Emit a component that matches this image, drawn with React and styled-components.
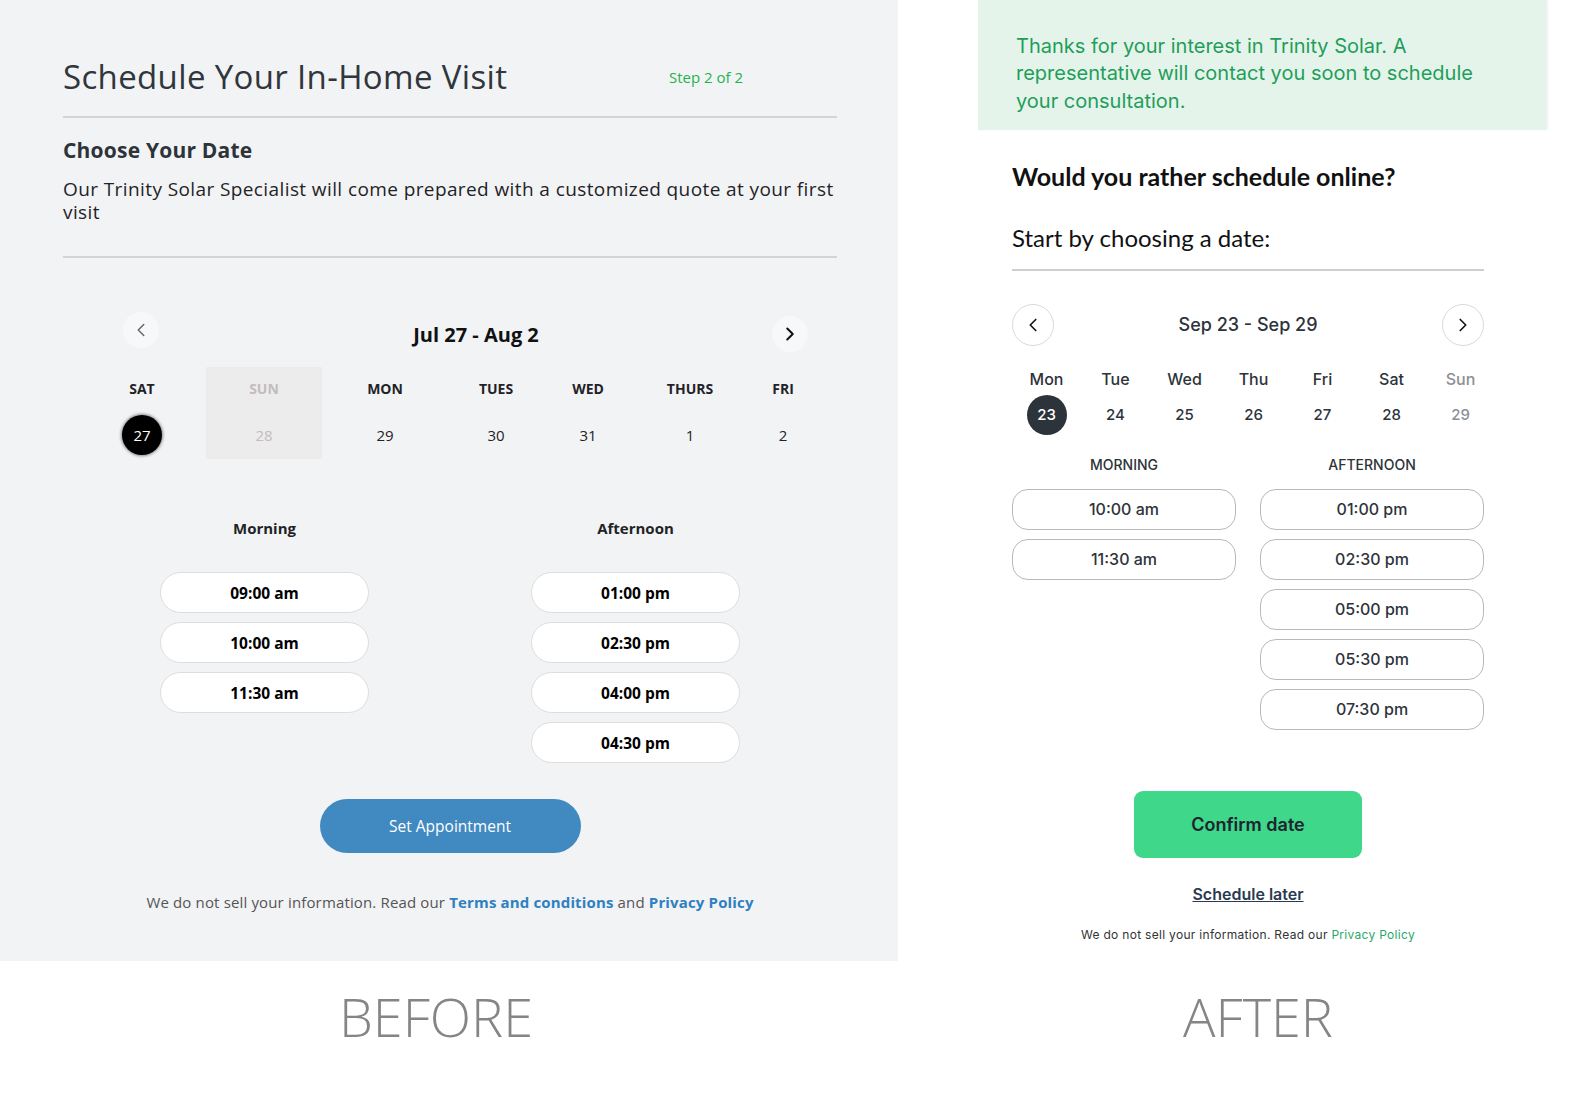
import styled, { createGlobalStyle } from 'styled-components';
import { ChevronLeft, ChevronRight } from 'lucide-react';

const GlobalStyle = createGlobalStyle`
  html, body { margin: 0; padding: 0; background: #fff; }
  body { width: 1588px; height: 1094px; overflow: hidden; }
  * { box-sizing: border-box; }
`;

const POP = `"Open Sans", "Noto Sans", sans-serif`;
const INTER = `Inter, "Noto Sans", sans-serif`;

const oldWeek = [
  { day: 'SAT', num: 27, sel: true },
  { day: 'SUN', num: 28, off: true },
  { day: 'MON', num: 29 },
  { day: 'TUES', num: 30 },
  { day: 'WED', num: 31 },
  { day: 'THURS', num: 1 },
  { day: 'FRI', num: 2 },
];

const newWeek = [
  { day: 'Mon', num: 23, sel: true },
  { day: 'Tue', num: 24 },
  { day: 'Wed', num: 25 },
  { day: 'Thu', num: 26 },
  { day: 'Fri', num: 27 },
  { day: 'Sat', num: 28 },
  { day: 'Sun', num: 29, off: true },
];

const oldSlots = {
  Morning: ['09:00 am', '10:00 am', '11:30 am'],
  Afternoon: ['01:00 pm', '02:30 pm', '04:00 pm', '04:30 pm'],
};

const newSlots = {
  Morning: ['10:00 am', '11:30 am'],
  Afternoon: ['01:00 pm', '02:30 pm', '05:00 pm', '05:30 pm', '07:30 pm'],
};

export default function App() {
  return (
    <>
      <GlobalStyle />
      <Page>
        <BeforePanel>
          <HeaderRow>
            <Title>Schedule Your In-Home Visit</Title>
            <StepTag>Step 2 of 2</StepTag>
          </HeaderRow>
          <Rule $top={19} />
          <SectionTitle>Choose Your Date</SectionTitle>
          <Intro>Our Trinity Solar Specialist will come prepared with a customized quote at your first visit</Intro>
          <Rule $top={32} />

          <OldNav>
            <OldArrow>
              <ChevronLeft size={22} strokeWidth={1.6} color="#666" />
            </OldArrow>
            <OldRange>Jul 27 - Aug 2</OldRange>
            <OldArrow $next>
              <ChevronRight size={22} strokeWidth={2.2} color="#111" />
            </OldArrow>
          </OldNav>

          <OldWeek>
            {oldWeek.map((d) => (
              <OldDay key={d.day} $off={d.off}>
                <OldDayName>{d.day}</OldDayName>
                <OldDate $sel={d.sel}>{d.num}</OldDate>
              </OldDay>
            ))}
          </OldWeek>

          <OldTimes>
            {Object.entries(oldSlots).map(([label, list]) => (
              <OldTimeCol key={label}>
                <OldTimeHeading>{label}</OldTimeHeading>
                {list.map((t) => (
                  <OldSlot key={t}>{t}</OldSlot>
                ))}
              </OldTimeCol>
            ))}
          </OldTimes>

          <SetButton>Set Appointment</SetButton>
          <OldFine>
            We do not sell your information. Read our <a href="#">Terms and conditions</a> and <a href="#">Privacy Policy</a>
          </OldFine>
        </BeforePanel>

        <AfterCol>
          <Banner>
            Thanks for your interest in Trinity Solar. A representative will contact you soon to schedule your consultation.
          </Banner>
          <AfterBody>
            <Question>Would you rather schedule online?</Question>
            <Prompt>Start by choosing a date:</Prompt>
            <AfterRule />

            <NewNav>
              <NewArrow><ChevronLeft size={22} strokeWidth={1.8} color="#111" /></NewArrow>
              <NewRange>Sep 23 - Sep 29</NewRange>
              <NewArrow><ChevronRight size={22} strokeWidth={1.8} color="#111" /></NewArrow>
            </NewNav>

            <NewWeek>
              {newWeek.map((d) => (
                <NewDay key={d.day} $off={d.off}>
                  <span>{d.day}</span>
                  <NewDate $sel={d.sel}>{d.num}</NewDate>
                </NewDay>
              ))}
            </NewWeek>

            <NewTimes>
              {Object.entries(newSlots).map(([label, list]) => (
                <NewTimeCol key={label}>
                  <NewTimeHeading>{label}</NewTimeHeading>
                  {list.map((t) => (
                    <NewSlot key={t}>{t}</NewSlot>
                  ))}
                </NewTimeCol>
              ))}
            </NewTimes>

            <ConfirmButton>Confirm date</ConfirmButton>
            <LaterLink href="#">Schedule later</LaterLink>
            <NewFine>
              We do not sell your information. Read our <a href="#">Privacy Policy</a>
            </NewFine>
          </AfterBody>
        </AfterCol>

        <Caption $shift={-26}>BEFORE</Caption>
        <Caption $shift={30}>AFTER</Caption>
      </Page>
    </>
  );
}

const Page = styled.div`
  display: grid;
  grid-template-columns: 898px 1fr;
  grid-template-rows: 961px auto;
  width: 1588px;
`;

/* ---------- before ---------- */

const BeforePanel = styled.section`
  background: #f2f3f5;
  padding: 57px 61px 0 63px;
  font-family: ${POP};
  color: #2d3339;
`;

const HeaderRow = styled.div`
  display: grid;
  grid-template-columns: 606px auto;
  align-items: center;
  height: 40px;
`;

const Title = styled.h1`
  margin: 0;
  font-size: 33px;
  font-weight: 400;
  letter-spacing: 0.35px;
  line-height: 40px;
  color: #30363c;
`;

const StepTag = styled.span`
  font-size: 15px;
  font-weight: 500;
  color: #22b34b;
`;

const Rule = styled.div`
  height: 2px;
  margin-top: ${(p) => p.$top}px;
  background: #d3d4d6;
`;

const SectionTitle = styled.h2`
  margin: 18px 0 0;
  font-size: 21px;
  font-weight: 700;
  letter-spacing: 0.2px;
  line-height: 28px;
`;

const Intro = styled.p`
  margin: 14px 0 0;
  font-size: 19px;
  letter-spacing: 0.4px;
  line-height: 23px;
  color: #1f2327;
`;

const OldNav = styled.div`
  display: flex;
  align-items: flex-start;
  margin-top: 54px;
  padding: 0 29px 0 60px;
  height: 40px;
`;

const OldArrow = styled.div`
  width: 36px;
  height: 36px;
  border-radius: 50%;
  background: #f7f8f9;
  display: flex;
  align-items: center;
  justify-content: center;
  margin-top: ${(p) => (p.$next ? 4 : 0)}px;
`;

const OldRange = styled.div`
  flex: 1;
  margin-top: 9px;
  padding-left: 21px;
  text-align: center;
  font-size: 20px;
  font-weight: 700;
  line-height: 28px;
  color: #111;
`;

const OldWeek = styled.div`
  display: grid;
  grid-template-columns: 128px 116px 126px 96px 88px 116px 70px;
  margin: 15px 0 0 15px;
`;

const OldDay = styled.div`
  display: flex;
  flex-direction: column;
  align-items: center;
  height: 92px;
  background: ${(p) => (p.$off ? '#ececec' : 'transparent')};
  color: ${(p) => (p.$off ? '#c2bcbc' : '#1f2327')};
`;

const OldDayName = styled.span`
  padding-top: 12px;
  font-size: 14px;
  font-weight: 700;
  line-height: 20px;
`;

const OldDate = styled.span`
  width: 40px;
  height: 40px;
  margin-top: 16px;
  border-radius: 50%;
  display: flex;
  align-items: center;
  justify-content: center;
  font-size: 15px;
  background: ${(p) => (p.$sel ? '#000' : 'transparent')};
  color: ${(p) => (p.$sel ? '#fff' : 'inherit')};
  box-shadow: ${(p) => (p.$sel ? '0 0 3px 1px rgba(0,0,0,.45)' : 'none')};
`;

const OldTimes = styled.div`
  display: grid;
  grid-template-columns: 209px 209px;
  column-gap: 162px;
  align-items: start;
  margin: 59px 0 0 97px;
`;

const OldTimeCol = styled.div`
  display: flex;
  flex-direction: column;
  gap: 9px;
`;

const OldTimeHeading = styled.div`
  margin-bottom: 25px;
  text-align: center;
  font-size: 15px;
  font-weight: 700;
  line-height: 20px;
  color: #1f2327;
`;

const OldSlot = styled.button`
  height: 41px;
  border: 1px solid #dcdddf;
  border-radius: 21px;
  background: #fff;
  font-family: ${POP};
  font-size: 15.5px;
  font-weight: 700;
  color: #000;
`;

const SetButton = styled.button`
  display: block;
  width: 261px;
  height: 54px;
  margin: 36px auto 0;
  border: none;
  border-radius: 27px;
  background: #418ac1;
  color: #fff;
  font-family: ${POP};
  font-size: 15.5px;
  font-weight: 500;
`;

const OldFine = styled.p`
  margin: 38px 0 0;
  text-align: center;
  font-size: 15px;
  letter-spacing: 0.15px;
  line-height: 22px;
  color: #555;

  a {
    color: #2f80c0;
    font-weight: 700;
    text-decoration: none;
  }
`;

/* ---------- after ---------- */

const AfterCol = styled.section`
  padding-left: 80px;
  font-family: ${INTER};
`;

const Banner = styled.div`
  width: 568px;
  padding: 33px 60px 15px 38px;
  background: #e5f4ea;
  box-shadow: 2px 0 2px rgba(0, 0, 0, 0.06);
  font-size: 20px;
  line-height: 27.3px;
  color: #1f9e5b;
`;

const AfterBody = styled.div`
  width: 472px;
  margin-left: 34px;
  color: #2d333a;
`;

const Question = styled.h2`
  margin: 31px 0 0;
  font-family: Lato, "Open Sans", sans-serif;
  font-size: 25px;
  font-weight: 700;
  line-height: 30px;
  color: #111;
`;

const Prompt = styled.p`
  margin: 32px 0 0;
  font-family: Lato, "Open Sans", sans-serif;
  font-size: 24px;
  line-height: 30px;
  color: #111;
`;

const AfterRule = styled.div`
  height: 2px;
  margin-top: 16px;
  background: #cfcfcf;
`;

const NewNav = styled.div`
  display: flex;
  align-items: center;
  justify-content: space-between;
  margin-top: 33px;
`;

const NewArrow = styled.div`
  width: 42px;
  height: 42px;
  border: 1px solid #d9d9d9;
  border-radius: 50%;
  background: #fff;
  display: flex;
  align-items: center;
  justify-content: center;
`;

const NewRange = styled.div`
  font-size: 18px;
  font-weight: 500;
  color: #2d333a;
`;

const NewWeek = styled.div`
  display: grid;
  grid-template-columns: repeat(7, 69px);
  margin-top: 23px;
`;

const NewDay = styled.div`
  display: flex;
  flex-direction: column;
  align-items: center;
  font-size: 16px;
  font-weight: 500;
  line-height: 20px;
  color: ${(p) => (p.$off ? '#8c8f93' : '#2d333a')};
`;

const NewDate = styled.span`
  width: 40px;
  height: 40px;
  margin-top: 6px;
  border-radius: 50%;
  display: flex;
  align-items: center;
  justify-content: center;
  font-size: 15px;
  font-weight: 500;
  background: ${(p) => (p.$sel ? '#2d333a' : 'transparent')};
  color: ${(p) => (p.$sel ? '#fff' : 'inherit')};
`;

const NewTimes = styled.div`
  display: grid;
  grid-template-columns: 224px 224px;
  column-gap: 24px;
  align-items: start;
  margin-top: 21px;
`;

const NewTimeCol = styled.div`
  display: flex;
  flex-direction: column;
  gap: 9px;
`;

const NewTimeHeading = styled.div`
  margin-bottom: 6px;
  text-align: center;
  text-transform: uppercase;
  font-size: 14px;
  font-weight: 500;
  line-height: 18px;
  color: #2d333a;
`;

const NewSlot = styled.button`
  height: 41px;
  border: 1px solid #b9b9b9;
  border-radius: 16px;
  background: #fff;
  font-family: ${INTER};
  font-size: 16px;
  font-weight: 500;
  color: #2d333a;
`;

const ConfirmButton = styled.button`
  display: block;
  width: 228px;
  height: 67px;
  margin: 61px auto 0;
  border: none;
  border-radius: 9px;
  background: #3fd78a;
  font-family: ${INTER};
  font-size: 18px;
  font-weight: 600;
  color: #1d2430;
`;

const LaterLink = styled.a`
  display: block;
  margin-top: 26px;
  text-align: center;
  font-size: 16px;
  font-weight: 600;
  line-height: 20px;
  color: #2b3a4f;
  text-decoration: underline;
`;

const NewFine = styled.p`
  margin: 23px 0 0;
  text-align: center;
  font-size: 12px;
  line-height: 16px;
  letter-spacing: 0.3px;
  color: #333;

  a {
    color: #2aa86b;
    text-decoration: none;
  }
`;

const Caption = styled.div`
  margin-top: 25px;
  text-align: center;
  padding-left: ${(p) => Math.max(p.$shift, 0)}px;
  padding-right: ${(p) => Math.max(-p.$shift, 0)}px;
  font-family: "Open Sans", sans-serif;
  font-size: 54px;
  font-weight: 300;
  line-height: 60px;
  color: #858585;
`;
